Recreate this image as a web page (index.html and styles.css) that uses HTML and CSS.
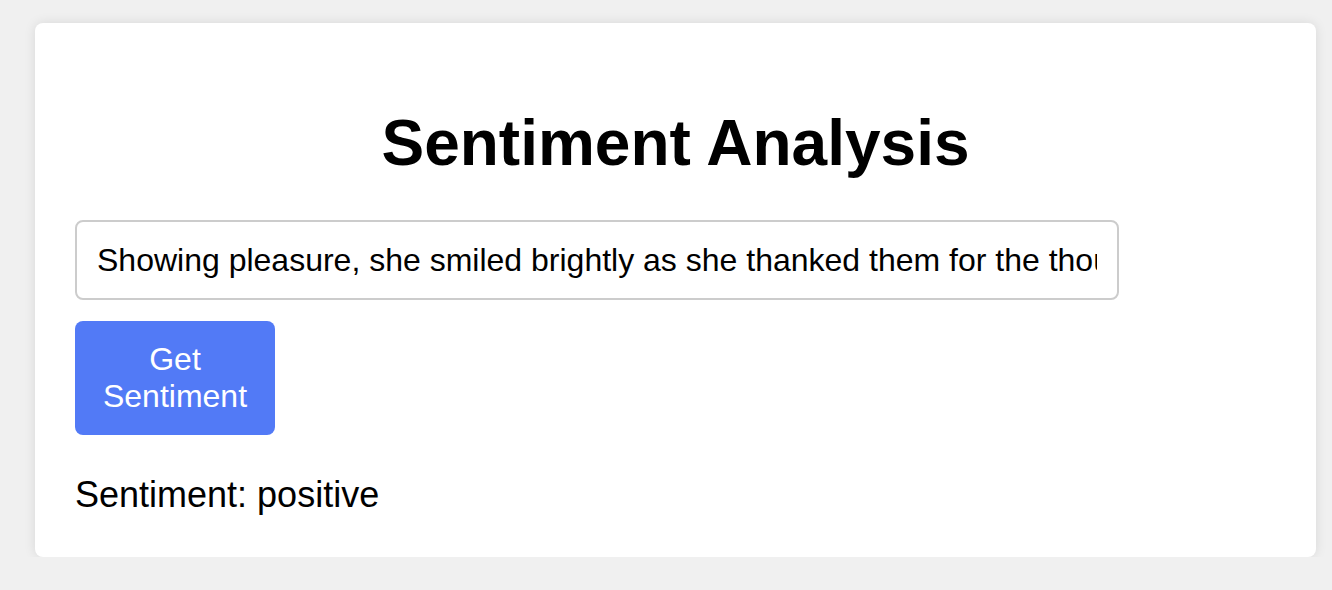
FILE: index.html
```html
<!DOCTYPE html>
<html lang="en">
<head>
<meta charset="utf-8">
<title>Sentiment Analysis</title>
<link rel="stylesheet" href="styles.css">
</head>
<body>
  <div class="card">
    <h1 class="title">Sentiment Analysis</h1>
    <input class="text-input" type="text" value="Showing pleasure, she smiled brightly as she thanked them for the thoughtful gift.">
    <button class="btn" type="button">Get Sentiment</button>
    <p class="result">Sentiment: positive</p>
  </div>
</body>
</html>
```

FILE: styles.css
```css
html, body {
  margin: 0;
  padding: 0;
}
body {
  background: #f0f0f0;
  font-family: "Liberation Sans", Arial, sans-serif;
  padding: 23px 16px 0 35px;
}
.card {
  background: #fff;
  border-radius: 8px;
  box-shadow: 0 0 12px rgba(0, 0, 0, 0.1);
  padding: 40px 40px 42px 40px;
  display: flex;
  flex-direction: column;
  align-items: flex-start;
}
.title {
  align-self: stretch;
  text-align: center;
  font-size: 64px;
  font-weight: bold;
  line-height: 74px;
  margin: 43px 0 40px 0;
  color: #000;
}
.text-input {
  box-sizing: border-box;
  width: 1044px;
  height: 80px;
  padding: 0 20px;
  border: 2px solid #ccc;
  border-radius: 8px;
  font-family: "Liberation Sans", Arial, sans-serif;
  font-size: 32px;
  color: #000;
  outline: none;
}
.btn {
  box-sizing: border-box;
  width: 200px;
  height: 114px;
  margin-top: 21px;
  padding: 20px;
  background: #527af6;
  color: #fff;
  border: none;
  border-radius: 8px;
  font-family: "Liberation Sans", Arial, sans-serif;
  font-size: 32px;
  line-height: 37px;
  text-align: center;
}
.result {
  margin: 39px 0 0 0;
  font-size: 36px;
  line-height: 41px;
  color: #000;
}
```
